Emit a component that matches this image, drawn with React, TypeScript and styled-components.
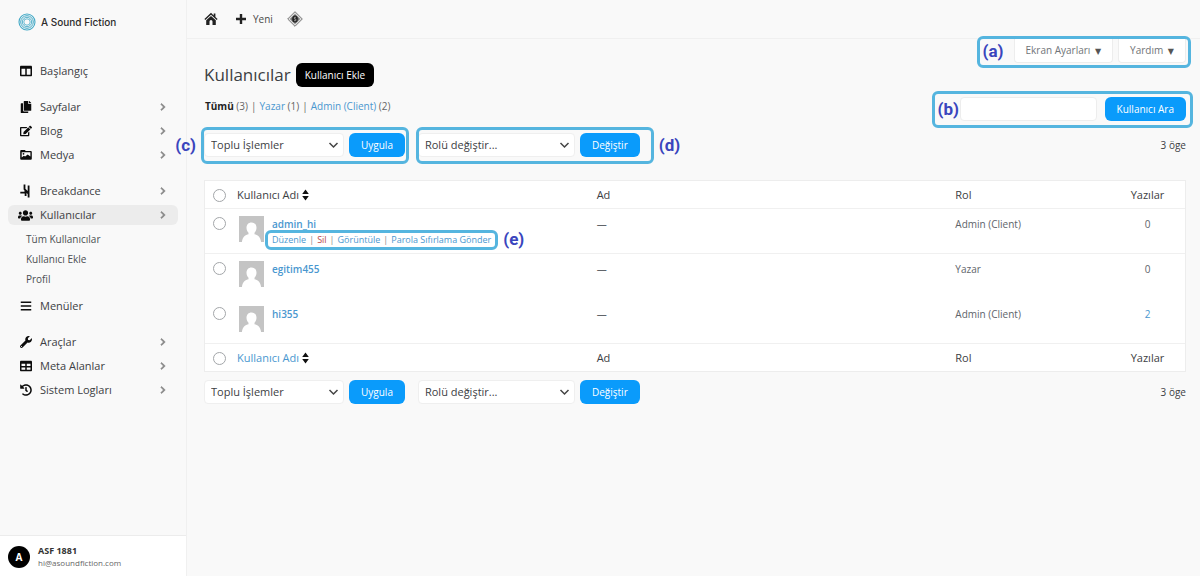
import React from "react";
import styled, { createGlobalStyle, css } from "styled-components";
import { FaBars, FaChevronRight, FaColumns, FaCopy, FaEdit, FaHistory, FaTable, FaUsers, FaWrench } from "react-icons/fa";

const blue = "#0a9bfb";
const link = "#4a97cf";

const GlobalStyle = createGlobalStyle`
  * { box-sizing: border-box; }
  body { margin: 0; background: #f9f9f9; color: #3c4043; font: 10px/16px "Open Sans", "Noto Sans", sans-serif; }
  button, input, select { font: inherit; color: inherit; margin: 0; }
  a { color: inherit; text-decoration: none; }
  ul { list-style: none; margin: 0; padding: 0; }
`;

const Shell = styled.div`
  display: grid;
  grid-template-columns: 187px minmax(0, 1fr);
  min-height: 100vh;
`;

const Sidebar = styled.aside`
  display: flex;
  flex-direction: column;
  border-right: 1px solid #f0f0f0;
`;

const Brand = styled.a`
  display: flex;
  align-items: center;
  gap: 5px;
  height: 44px;
  padding-left: 18px;
  font: 500 10px/16px Inter, sans-serif;
  color: #2b2b2b;
`;

const Nav = styled.nav`
  flex: 1;
  display: flex;
  flex-direction: column;
  gap: 16px;
  padding: 17px 8px;
`;

const NavGroup = styled.ul`
  display: flex;
  flex-direction: column;
  gap: 4px;
`;

const NavLink = styled.a<{ $active?: boolean }>`
  display: flex;
  align-items: center;
  gap: 8px;
  height: 20px;
  padding: 0 11px;
  border-radius: 6px;
  font-size: 11px;
  background: ${(p) => (p.$active ? "#ececec" : "transparent")};

  span { flex: 1; }
`;

const NavIcon = styled.i`
  display: flex;
  justify-content: center;
  width: 13px;
  font-size: 12px;
  color: #0c0c0c;

  svg { flex: none; }
`;

const Chevron = styled(FaChevronRight)`
  font-size: 8px;
  color: #858585;
  stroke-width: 40;
`;

const SubNav = styled.ul`
  padding: 4px 0 7px 18px;
  line-height: 20px;
  color: #4b4f52;
`;

const Account = styled.footer`
  display: flex;
  align-items: center;
  gap: 8px;
  height: 41px;
  padding: 2px 0 0 8px;
  background: #fff;
  border-top: 1px solid #ececec;
  line-height: 12px;
`;

const Initial = styled.span`
  display: grid;
  place-items: center;
  width: 22px;
  height: 22px;
  border-radius: 50%;
  background: #000;
  color: #fff;
  font-weight: 700;
`;

const AccountName = styled.div`
  font-size: 9px;
  font-weight: 700;
  color: #333;
`;

const AccountMail = styled.div`
  font-size: 8px;
  color: #666;
`;

const TopBar = styled.header`
  display: flex;
  align-items: center;
  gap: 14px;
  height: 39px;
  padding-left: 17px;
  border-bottom: 1px solid #f0f0f0;
`;

const TopLink = styled.a`
  display: flex;
  align-items: center;
  gap: 6px;
  min-width: 17px;
  color: #4a4a4a;
`;

const Content = styled.main`
  padding: 0 14px 16px 17px;
`;

const ScreenMeta = styled.div`
  display: flex;
  justify-content: flex-end;
`;

const Marked = styled.div<{ $gap?: number }>`
  position: relative;
  display: flex;
  align-items: center;
  gap: ${(p) => p.$gap ?? 5}px;
`;

const Frame = styled.div<{ $inset: string }>`
  position: absolute;
  inset: ${(p) => p.$inset};
  border: 3px solid #55b5df;
  border-radius: 6px;
  pointer-events: none;
`;

const Tag = styled.b<{ $side: "left" | "right" | "inside" }>`
  position: absolute;
  top: 50%;
  transform: translateY(-50%);
  padding-bottom: 3px;
  font: 700 17px/20px Roboto, sans-serif;
  color: #3a45bd;
  ${(p) => p.$side === "left" && css`right: 100%; margin-right: 8px;`}
  ${(p) => p.$side === "right" && css`left: 100%; margin-left: 8px;`}
  ${(p) => p.$side === "inside" && css`left: 3px;`}
`;

const MetaButton = styled.button`
  height: 24px;
  padding: 0 11px;
  border: 1px solid #ededed;
  border-top: 0;
  border-radius: 0 0 4px 4px;
  background: #fff;
  color: #707478;

  i { font: 8px/16px "DejaVu Sans", sans-serif; margin-left: 2px; color: #555; }
`;

const TitleRow = styled.div`
  display: flex;
  align-items: center;
  gap: 5px;
`;

const Title = styled.h1`
  margin: 0;
  font-size: 17px;
  line-height: 24px;
  font-weight: 400;
  color: #3c4043;
`;

const AddLink = styled.a`
  padding: 0 9px;
  border-radius: 6px;
  background: #000;
  color: #fff;
  line-height: 24px;
`;

const SubRow = styled.div`
  display: flex;
  justify-content: space-between;
  align-items: flex-start;
  margin: 10px 0 12px;
`;

const Views = styled.div`
  display: flex;
  gap: 3px;
  padding-left: 1px;
  line-height: 18px;
  color: #666;

  a { color: ${link}; }
  b { color: #222; }
`;

const Search = styled.input`
  width: 137px;
  height: 24px;
  padding: 0 8px;
  border: 1px solid #ededed;
  border-radius: 4px;
  background: #fff;
`;

const Button = styled.button`
  height: 24px;
  padding: 0 12px;
  border: 0;
  border-radius: 6px;
  background: ${blue};
  color: #fff;
`;

const NavRow = styled.div`
  display: flex;
  align-items: center;
  gap: 13px;
`;

const Count = styled.span`
  margin-left: auto;
`;

const SelectBox = styled.span<{ $width: number }>`
  position: relative;
  width: ${(p) => p.$width}px;

  select {
    display: block;
    appearance: none;
    width: 100%;
    height: 24px;
    padding: 0 24px 0 6px;
    border: 1px solid #efefef;
    border-radius: 4px;
    background: #fff;
    font-size: 11px;
  }
  svg { position: absolute; right: 5px; top: 7px; pointer-events: none; }
`;

const Table = styled.table`
  width: 100%;
  margin: 23px 0 8px;
  table-layout: fixed;
  border-collapse: separate;
  border-spacing: 0;
  border: 1px solid #ededed;
  background: #fff;

  th, td { padding: 0; text-align: left; font-weight: 400; }
  th { height: 28px; font-size: 11px; }
  th:last-child, td:last-child { text-align: center; }
  thead th { border-bottom: 1px solid #f0f0f0; }
  tfoot th { border-top: 1px solid #f0f0f0; }
`;

const Row = styled.tr<{ $line?: boolean }>`
  td {
    height: 45px;
    padding-top: 7px;
    vertical-align: top;
    color: #60646a;
    ${(p) => p.$line && css`border-bottom: 1px solid #f0f0f0;`}
  }

  &:last-child td { height: 44px; }
`;

const Check = styled.input`
  display: block;
  appearance: none;
  width: 13px;
  height: 13px;
  margin: 1px 0 0 8px;
  border: 1px solid #a3a6a9;
  border-radius: 50%;
  background: #fff;
`;

const Sort = styled.a<{ $link?: boolean }>`
  display: inline-flex;
  align-items: center;
  gap: 3px;
  color: ${(p) => (p.$link ? link : "inherit")};
`;

const User = styled.div`
  display: flex;
  gap: 8px;
  padding-left: 2px;
`;

const UserName = styled.a`
  color: ${link};
  font-weight: 600;
`;

const Actions = styled(Marked)`
  width: max-content;
  font-size: 9px;
  color: #888;

  a { color: ${link}; }
  a.danger { color: #b8484a; }
`;

const Posts = styled.span<{ $link?: boolean }>`
  color: ${(p) => (p.$link ? link : "inherit")};
`;

function BrandMark() {
  return (
    <svg width="18" height="18" viewBox="0 0 18 18" fill="none" stroke="#43a9c6">
      <circle cx="9" cy="9" r="8" strokeWidth="1.1" />
      <circle cx="9" cy="9" r="6.3" strokeWidth="1" />
      <circle cx="9" cy="9" r="4.7" strokeWidth=".9" />
      <circle cx="9" cy="9" r="3.2" strokeWidth=".8" />
    </svg>
  );
}

function MediaIcon() {
  return (
    <svg width="12" height="12" viewBox="0 0 12 12">
      <path fill="currentColor" fillRule="evenodd" d="M1.2 1h3.6l1 1h5a1 1 0 0 1 1 1v6.800a1 1 0 0 1-1 1H1.200a1 1 0 0 1-1-1V2a1 1 0 0 1 1-1zM1.700 3.200v5.200l2.100-1.600 1.300.6 2.600-2 2.700 2V3.200z" />
      <circle cx="3.500" cy="4.800" r=".9" fill="currentColor" />
    </svg>
  );
}

function DanceIcon() {
  return (
    <svg width="11" height="14" viewBox="0 0 11 14" fill="currentColor">
      <path d="M3.600.5h1.800v4.200L7.700 7V1.500h1.800v12H7.700V9.900L6.500 9v3H4.700V9.400H.3V7.700h4.200V6.500l-.9-1z" />
    </svg>
  );
}

function HomeIcon() {
  return (
    <svg width="14" height="14" viewBox="0 0 14 14" fill="#222">
      <path d="M7 .8 9.700 3.400V1.500h1.700V5l2.200 2.100-.9 1L7 2.800 1.300 8.100l-.9-1z" />
      <path fillRule="evenodd" d="M7 3.900 11.800 8.300V13H2.200V8.300zM5.500 13h3V9.600a1.500 1.500 0 0 0-3 0z" />
    </svg>
  );
}

function DiamondIcon() {
  return (
    <svg width="16" height="16" viewBox="0 0 16 16">
      <path d="M8 .7 15.300 8 8 15.300.7 8z" fill="#ddd" stroke="#777" strokeWidth="1" />
      <path d="M8 2.900 13.100 8 8 13.100 2.900 8z" fill="#777" />
      <ellipse cx="8" cy="8" rx="2.800" ry="3.500" fill="#222" />
      <path d="M9 6.300H7.400V8h1.400v1.700H7" fill="none" stroke="#bbb" strokeWidth=".7" />
    </svg>
  );
}

function SortIcon() {
  return (
    <svg width="7" height="12" viewBox="0 0 7 12" fill="#111">
      <path d="M3.500.5 6.800 5H.2zM3.500 11.500.2 7h6.600z" />
    </svg>
  );
}

function Avatar() {
  return (
    <svg width="25" height="26" viewBox="0 0 25 26">
      <path fill="#c4c4c4" d="M0 0h25v26H0z" />
      <path fill="#fff" d="M12.500 6.500c3 0 5 2.200 5 5.300 0 2-.8 3.800-2 4.900v1.600c3 .7 5.800 2 6.600 7.700H2.900c.8-5.700 3.600-7 6.600-7.700v-1.600c-1.200-1.100-2-2.900-2-4.900 0-3.100 2-5.300 5-5.300z" />
    </svg>
  );
}

type Item = { label: string; icon: React.ReactNode; arrow?: boolean; active?: boolean };

function NavItem({ label, icon, arrow = true, active }: Item) {
  return (
    <NavLink href="#" $active={active}>
      <NavIcon>{icon}</NavIcon>
      <span>{label}</span>
      {arrow && <Chevron />}
    </NavLink>
  );
}

function Select({ label, text, width }: { label: string; text: string; width: number }) {
  return (
    <SelectBox $width={width}>
      <select aria-label={label}>
        <option>{text}</option>
      </select>
      <svg width="11" height="10" viewBox="0 0 11 10" fill="none" stroke="#444" strokeWidth="1.500">
        <path d="m1.500 3 4 4 4-4" />
      </svg>
    </SelectBox>
  );
}

function TableNav({ marked }: { marked?: boolean }) {
  return (
    <NavRow>
      <Marked>
        <Select label="Toplu işlem seç" text="Toplu İşlemler" width={140} />
        <Button>Uygula</Button>
        {marked && <Frame $inset="-6px -4px -7px -3px"><Tag $side="left">(c)</Tag></Frame>}
      </Marked>
      <Marked>
        <Select label="Rolü değiştir" text="Rolü değiştir..." width={157} />
        <Button>Değiştir</Button>
        {marked && <Frame $inset="-6px -14px -7px -2px"><Tag $side="right">(d)</Tag></Frame>}
      </Marked>
      <Count>3 öge</Count>
    </NavRow>
  );
}

function HeadRow({ linked }: { linked?: boolean }) {
  return (
    <tr>
      <th><Check type="checkbox" aria-label="Tümünü seç" /></th>
      <th><Sort href="#" $link={linked}>Kullanıcı Adı <SortIcon /></Sort></th>
      <th>Ad</th>
      <th>Rol</th>
      <th>Yazılar</th>
    </tr>
  );
}

const users = [
  { name: "admin_hi", role: "Admin (Client)", posts: 0, open: true },
  { name: "egitim455", role: "Yazar", posts: 0, open: false },
  { name: "hi355", role: "Admin (Client)", posts: 2, open: false },
];

export default function App() {
  return (
    <>
      <GlobalStyle />
      <Shell>
        <Sidebar>
          <Brand href="#"><BrandMark />A Sound Fiction</Brand>
          <Nav>
            <NavItem label="Başlangıç" icon={<FaColumns />} arrow={false} />
            <NavGroup>
              <li><NavItem label="Sayfalar" icon={<FaCopy />} /></li>
              <li><NavItem label="Blog" icon={<FaEdit />} /></li>
              <li><NavItem label="Medya" icon={<MediaIcon />} /></li>
            </NavGroup>
            <div>
              <NavGroup>
                <li><NavItem label="Breakdance" icon={<DanceIcon />} /></li>
                <li><NavItem label="Kullanıcılar" icon={<FaUsers size={15} />} active /></li>
              </NavGroup>
              <SubNav>
                <li><a href="#">Tüm Kullanıcılar</a></li>
                <li><a href="#">Kullanıcı Ekle</a></li>
                <li><a href="#">Profil</a></li>
              </SubNav>
              <NavGroup>
                <li><NavItem label="Menüler" icon={<FaBars />} arrow={false} /></li>
              </NavGroup>
            </div>
            <NavGroup>
              <li><NavItem label="Araçlar" icon={<FaWrench />} /></li>
              <li><NavItem label="Meta Alanlar" icon={<FaTable />} /></li>
              <li><NavItem label="Sistem Logları" icon={<FaHistory />} /></li>
            </NavGroup>
          </Nav>
          <Account>
            <Initial>A</Initial>
            <div>
              <AccountName>ASF 1881</AccountName>
              <AccountMail>hi@asoundfiction.com</AccountMail>
            </div>
          </Account>
        </Sidebar>
        <div>
          <TopBar>
            <TopLink href="#" aria-label="Ana sayfa"><HomeIcon /></TopLink>
            <TopLink href="#">
              <svg width="12" height="12" viewBox="0 0 12 12" stroke="#222" strokeWidth="2.400"><path d="M6 1v10M1 6h10" /></svg>
              Yeni
            </TopLink>
            <TopLink href="#" aria-label="Eklenti"><DiamondIcon /></TopLink>
          </TopBar>
          <Content>
            <ScreenMeta>
              <Marked>
                <MetaButton>Ekran Ayarları <i>▼</i></MetaButton>
                <MetaButton>Yardım <i>▼</i></MetaButton>
                <Frame $inset="-3px -5px -5px -37px"><Tag $side="inside">(a)</Tag></Frame>
              </Marked>
            </ScreenMeta>
            <TitleRow>
              <Title>Kullanıcılar</Title>
              <AddLink href="#">Kullanıcı Ekle</AddLink>
            </TitleRow>
            <SubRow>
              <Views>
                <span><b>Tümü</b> (3)</span>|
                <span><a href="#">Yazar</a> (1)</span>|
                <span><a href="#">Admin (Client)</a> (2)</span>
              </Views>
              <Marked $gap={8}>
                <Search type="search" aria-label="Kullanıcı ara" />
                <Button>Kullanıcı Ara</Button>
                <Frame $inset="-6px -7px -7px -28px"><Tag $side="inside">(b)</Tag></Frame>
              </Marked>
            </SubRow>
            <TableNav marked />
            <Table>
              <colgroup>
                <col width="32" />
                <col width="36.700%" />
                <col width="36.600%" />
                <col />
                <col width="75" />
              </colgroup>
              <thead><HeadRow /></thead>
              <tbody>
                {users.map((u) => (
                  <Row key={u.name} $line={u.open}>
                    <td><Check type="checkbox" aria-label={u.name} /></td>
                    <td>
                      <User>
                        <Avatar />
                        <div>
                          <UserName href="#">{u.name}</UserName>
                          {u.open && (
                            <Actions $gap={3}>
                              <a href="#">Düzenle</a>|
                              <a href="#" className="danger">Sil</a>|
                              <a href="#">Görüntüle</a>|
                              <a href="#">Parola Sıfırlama Gönder</a>
                              <Frame $inset="-2px -7px"><Tag $side="right">(e)</Tag></Frame>
                            </Actions>
                          )}
                        </div>
                      </User>
                    </td>
                    <td>—</td>
                    <td>{u.role}</td>
                    <td><Posts $link={u.posts > 0}>{u.posts}</Posts></td>
                  </Row>
                ))}
              </tbody>
              <tfoot><HeadRow linked /></tfoot>
            </Table>
            <TableNav />
          </Content>
        </div>
      </Shell>
    </>
  );
}
